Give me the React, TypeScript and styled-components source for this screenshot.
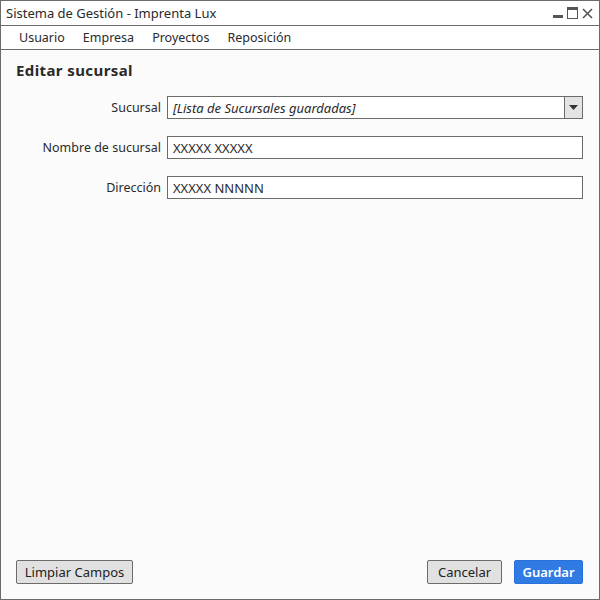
import styled, { createGlobalStyle } from 'styled-components';

const GlobalStyle = createGlobalStyle`
  html, body {
    margin: 0;
    padding: 0;
    background: #ffffff;
  }
  * {
    box-sizing: border-box;
  }
`;

const Window = styled.div`
  width: 600px;
  height: 600px;
  border: 1px solid #6b6b6b;
  background: #fbfbfb;
  display: flex;
  flex-direction: column;
  font-family: 'Noto Sans', 'DejaVu Sans', sans-serif;
  color: #2a2a2a;
  font-size: 13px;
`;

const TitleBar = styled.div`
  height: 25px;
  flex: none;
  display: flex;
  align-items: center;
  justify-content: space-between;
  padding: 0 6px 0 5px;
  background: #ffffff;
  border-bottom: 1px solid #6b6b6b;
`;

const Controls = styled.div`
  display: flex;
  align-items: center;
  gap: 4px;
`;

const MenuBar = styled.ul`
  height: 24px;
  flex: none;
  margin: 0;
  padding: 0 0 0 18px;
  list-style: none;
  display: flex;
  align-items: center;
  gap: 18px;
  font-size: 12.5px;
  background: #ffffff;
  border-bottom: 1px solid #6b6b6b;
`;

const Content = styled.div`
  flex: 1;
  display: flex;
  flex-direction: column;
  padding: 10px 16px 15px 15px;
`;

const Heading = styled.h2`
  margin: 0 0 16px;
  font-size: 15px;
  font-weight: 700;
  letter-spacing: 0.4px;
`;

const Form = styled.div`
  display: flex;
  flex-direction: column;
  gap: 17px;
`;

const Row = styled.div`
  display: grid;
  grid-template-columns: 145px 1fr;
  column-gap: 6px;
  align-items: center;
`;

const Label = styled.label`
  text-align: right;
  font-size: 12.5px;
`;

const Field = styled.div<{ italic?: boolean }>`
  height: 23px;
  border: 1px solid #6b6b6b;
  background: #ffffff;
  display: flex;
  align-items: center;
  padding-left: 5px;
  font-style: ${(p) => (p.italic ? 'italic' : 'normal')};
  position: relative;
`;

const DropButton = styled.div`
  position: absolute;
  right: 0;
  top: 0;
  bottom: 0;
  width: 18px;
  border-left: 1px solid #6b6b6b;
  background: #e3e3e3;
  display: flex;
  align-items: center;
  justify-content: center;
`;

const Spacer = styled.div`
  flex: 1;
`;

const Footer = styled.div`
  display: flex;
  align-items: center;
  justify-content: space-between;
`;

const ButtonGroup = styled.div`
  display: flex;
  gap: 12px;
`;

const Button = styled.button<{ primary?: boolean; w: number }>`
  height: 24px;
  width: ${(p) => p.w}px;
  padding: 0;
  font-family: inherit;
  font-size: 13px;
  border-radius: 2px;
  border: 1px solid ${(p) => (p.primary ? '#2a72d9' : '#6b6b6b')};
  background: ${(p) => (p.primary ? '#2f7be3' : '#e1e1e1')};
  color: ${(p) => (p.primary ? '#ffffff' : '#222222')};
  font-weight: ${(p) => (p.primary ? 600 : 400)};
`;

const App = () => {
  return (
    <>
      <GlobalStyle />
      <Window>
        <TitleBar>
          <span>Sistema de Gestión - Imprenta Lux</span>
          <Controls>
            <svg width="10" height="12" viewBox="0 0 10 12">
              <rect x="0" y="8" width="10" height="3" fill="#555" />
            </svg>
            <svg width="11" height="12" viewBox="0 0 11 12">
              <rect x="0.5" y="0.5" width="10" height="11" fill="none" stroke="#555" />
              <rect x="0" y="0" width="11" height="3" fill="#555" />
            </svg>
            <svg width="11" height="11" viewBox="0 0 11 11">
              <path d="M1 1 L10 10 M10 1 L1 10" stroke="#555" strokeWidth="1.6" />
            </svg>
          </Controls>
        </TitleBar>
        <MenuBar>
          <li>Usuario</li>
          <li>Empresa</li>
          <li>Proyectos</li>
          <li>Reposición</li>
        </MenuBar>
        <Content>
          <Heading>Editar sucursal</Heading>
          <Form>
            <Row>
              <Label>Sucursal</Label>
              <Field italic>
                [Lista de Sucursales guardadas]
                <DropButton>
                  <svg width="9" height="5" viewBox="0 0 9 5">
                    <path d="M0 0 H9 L4.5 5 Z" fill="#333" />
                  </svg>
                </DropButton>
              </Field>
            </Row>
            <Row>
              <Label>Nombre de sucursal</Label>
              <Field>XXXXX XXXXX</Field>
            </Row>
            <Row>
              <Label>Dirección</Label>
              <Field>XXXXX NNNNN</Field>
            </Row>
          </Form>
          <Spacer />
          <Footer>
            <Button w={117}>Limpiar Campos</Button>
            <ButtonGroup>
              <Button w={75}>Cancelar</Button>
              <Button primary w={69}>
                Guardar
              </Button>
            </ButtonGroup>
          </Footer>
        </Content>
      </Window>
    </>
  );
};

export default App;
